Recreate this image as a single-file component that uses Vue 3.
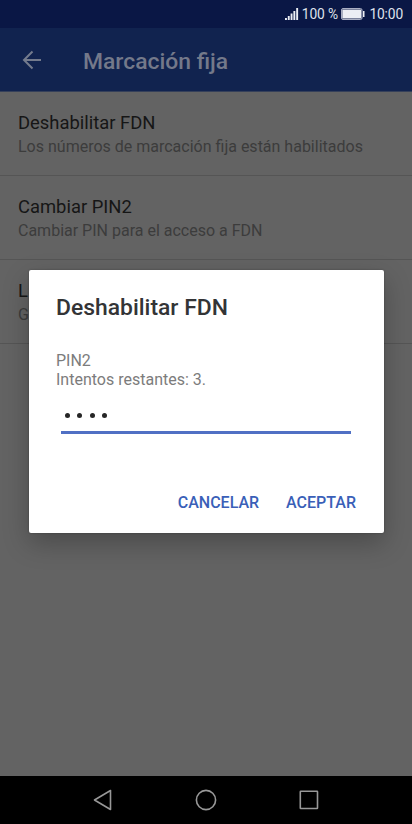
<template>
  <div class="screen">
    <div class="status-bar">
      <svg class="signal" width="14" height="12" viewBox="0 0 14 12">
        <rect v-for="(h, i) in bars" :key="i" :x="i * 2.8" :y="12 - h" width="1.9" :height="h" />
      </svg>
      <span class="percent">100 %</span>
      <svg class="battery" width="24" height="12" viewBox="0 0 24 12">
        <rect x="0.5" y="0.5" width="20.5" height="11" rx="1.5" class="battery-outline" />
        <rect x="1.3" y="1.5" width="19" height="9" />
        <rect x="22" y="3" width="1.5" height="6" />
      </svg>
      <span class="time">10:00</span>
    </div>

    <header class="app-bar">
      <svg class="back" width="20" height="20" viewBox="0 0 20 20">
        <path d="M19 10H2M10.5 1.5L2 10l8.5 8.5" />
      </svg>
      <h1>Marcación fija</h1>
    </header>

    <main class="list">
      <div v-for="item in items" :key="item.title" class="item">
        <div class="item-title">{{ item.title }}</div>
        <div class="item-summary">{{ item.summary }}</div>
      </div>
    </main>

    <nav class="nav-bar">
      <svg width="20" height="22" viewBox="0 0 20 22">
        <path d="M17.5 1.5v19L1.5 11z" />
      </svg>
      <svg width="22" height="22" viewBox="0 0 22 22">
        <circle cx="11" cy="11" r="9.6" />
      </svg>
      <svg width="20" height="22" viewBox="0 0 20 22">
        <rect x="1.3" y="2.3" width="17.2" height="17.2" rx="0.5" />
      </svg>
    </nav>

    <div class="overlay">
      <div class="dialog">
        <h2>Deshabilitar FDN</h2>
        <p class="message">PIN2<br />Intentos restantes: 3.</p>
        <div class="pin">
          <span v-for="n in pin.length" :key="n" class="dot"></span>
        </div>
        <div class="actions">
          <button class="cancel" @click="pin = ''">CANCELAR</button>
          <button class="accept">ACEPTAR</button>
        </div>
      </div>
    </div>
  </div>
</template>

<script setup>
import { ref } from 'vue'

const pin = ref('0000')
const bars = [2, 4, 6.5, 9, 12]

const items = [
  { title: 'Deshabilitar FDN', summary: 'Los números de marcación fija están habilitados' },
  { title: 'Cambiar PIN2', summary: 'Cambiar PIN para el acceso a FDN' },
  { title: 'L', summary: 'G' }
]
</script>

<style>
body {
  margin: 0;
  background: #636363;
}
</style>

<style scoped>
.screen {
  position: relative;
  display: flex;
  flex-direction: column;
  width: 412px;
  height: 824px;
  overflow: hidden;
  background: #636363;
  font-family: Roboto, sans-serif;
}

.status-bar {
  display: flex;
  align-items: center;
  justify-content: flex-end;
  height: 28px;
  padding-right: 9px;
  box-sizing: border-box;
  background: #0a1745;
  color: #dfe2ec;
}

.percent,
.time {
  font-size: 13.8px;
  letter-spacing: -0.15px;
}

.signal,
.battery {
  fill: #eceef4;
}

.signal {
  margin-right: 3px;
}

.battery {
  margin: 0 4px 0 3.5px;
}

.battery-outline {
  fill: none;
  stroke: #a9aec2;
}

.app-bar {
  display: flex;
  align-items: center;
  height: 64px;
  padding: 1px 0 0 22px;
  box-sizing: border-box;
  background: #11234f;
  border-bottom: 1px solid #35405a;
}

.back {
  fill: none;
  stroke: #747b8d;
  stroke-width: 2;
}

h1 {
  margin: 2px 0 0 41px;
  color: #74798a;
  font-size: 22.9px;
  font-weight: 500;
}

.list {
  flex: 1;
}

.item {
  height: 84px;
  padding: 19px 18px 0;
  box-sizing: border-box;
  border-bottom: 1px solid #555;
}

.item-title {
  color: #161616;
  font-size: 18.4px;
  line-height: 24px;
}

.item-summary {
  color: #3c3c3c;
  font-size: 16px;
  line-height: 24px;
}

.nav-bar {
  display: flex;
  align-items: center;
  justify-content: center;
  gap: 82px;
  height: 48px;
  background: #000;
}

.nav-bar svg {
  fill: none;
  stroke: #989898;
  stroke-width: 1.6;
  stroke-linejoin: round;
}

.overlay {
  position: absolute;
  inset: 0;
  padding: 270px 28.5px 0;
}

.dialog {
  height: 263px;
  padding: 24px 27.5px 0;
  box-sizing: border-box;
  border-radius: 2px;
  background: #fff;
  box-shadow: 0 10px 26px rgba(0, 0, 0, 0.25), 0 0 2px rgba(0, 0, 0, 0.3);
}

h2 {
  margin: 0;
  color: #333436;
  font-size: 22.9px;
  font-weight: 500;
  line-height: 28px;
}

.message {
  margin: 29px 0 0;
  color: #7c7c7c;
  font-size: 16px;
  line-height: 19px;
}

.pin {
  display: flex;
  align-items: flex-end;
  gap: 7.6px;
  height: 45px;
  margin: 0 5px 0 4.5px;
  padding: 0 0 13px 4px;
  box-sizing: border-box;
  border-bottom: 3px solid #5070c4;
}

.dot {
  width: 5px;
  height: 5px;
  border-radius: 50%;
  background: #262626;
}

.actions {
  display: flex;
  justify-content: flex-end;
  gap: 27px;
  margin-top: 57px;
}

button {
  padding: 0;
  border: none;
  background: none;
  color: #3a5fb8;
  font-family: inherit;
  font-size: 16px;
  font-weight: 500;
  line-height: 24px;
  cursor: pointer;
}
</style>
